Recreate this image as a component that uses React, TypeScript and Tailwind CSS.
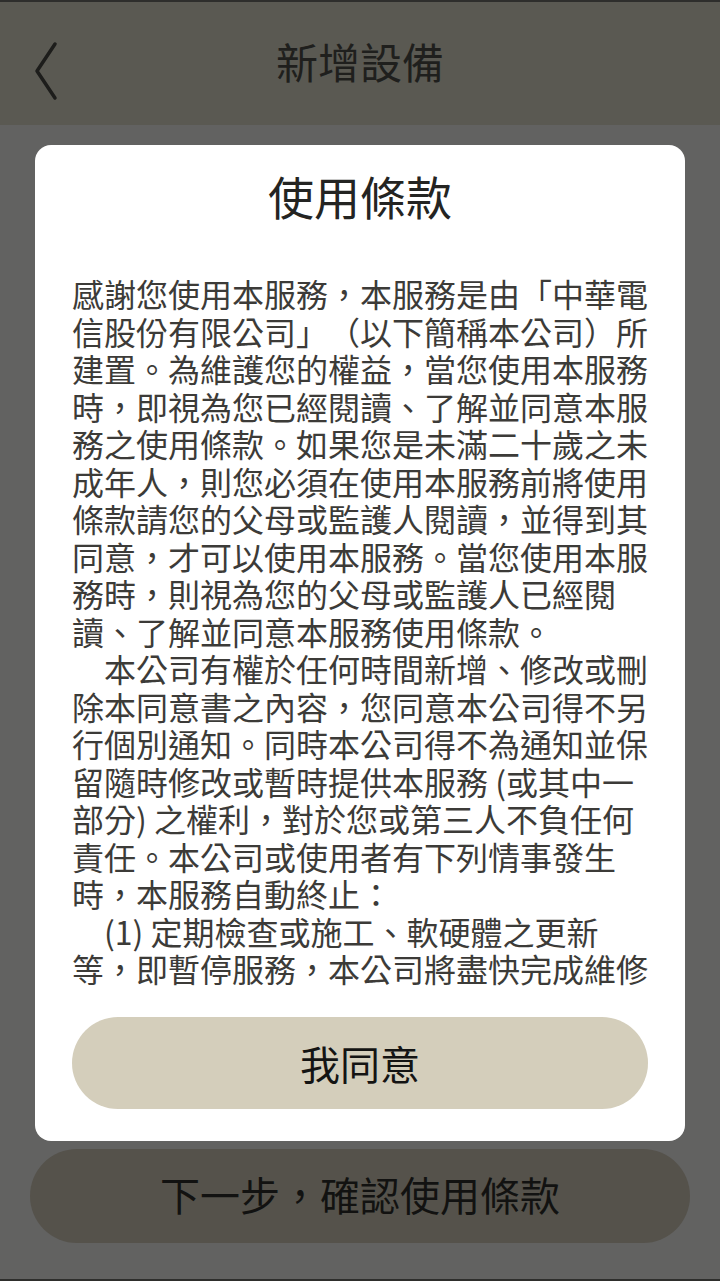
const cjk = "font-['Noto_Sans_CJK_TC','Noto_Sans',sans-serif]";

const terms = [
  '感謝您使用本服務，本服務是由「中華電信股份有限公司」（以下簡稱本公司）所建置。為維護您的權益，當您使用本服務時，即視為您已經閱讀、了解並同意本服務之使用條款。如果您是未滿二十歲之未成年人，則您必須在使用本服務前將使用條款請您的父母或監護人閱讀，並得到其同意，才可以使用本服務。當您使用本服務時，則視為您的父母或監護人已經閱讀、了解並同意本服務使用條款。',
  '　本公司有權於任何時間新增、修改或刪除本同意書之內容，您同意本公司得不另行個別通知。同時本公司得不為通知並保留隨時修改或暫時提供本服務 (或其中一部分) 之權利，對於您或第三人不負任何責任。本公司或使用者有下列情事發生時，本服務自動終止：',
  '　(1) 定期檢查或施工、軟硬體之更新等，即暫停服務，本公司將盡快完成維修並恢復服務。',
  '　(2) 發生天災或其他不可抗力之事由，致本服務無法正常提供時。',
  '　(3) 使用者違反本使用條款之任何約定時。',
];

function ChevronLeft() {
  return (
    <svg width="28" height="62" viewBox="0 0 28 62" fill="none">
      <path d="M22 4 L4 31 L22 58" stroke="#1d1d1b" strokeWidth="3.5" strokeLinecap="round" strokeLinejoin="round" />
    </svg>
  );
}

export default function App() {
  return (
    <div className={`flex h-[1281px] w-[720px] flex-col bg-[#626261] ${cjk}`}>
      <div className="h-[2px] bg-[#2e2e2c]" />

      <header className="relative flex h-[123px] items-center justify-center bg-[#5a5952] pb-[6px]">
        <div className="absolute left-[33px] top-[38px]">
          <ChevronLeft />
        </div>
        <h1 className="text-[42px] leading-none text-[#1f1f1d]">新增設備</h1>
      </header>

      <div className="mx-[35px] mt-[20px] flex h-[996px] flex-col rounded-[16px] bg-white px-[37px] pt-[23px] pb-[30px]">
        <h2 className="text-center text-[46px] leading-[55px] text-[#242422]">使用條款</h2>

        <div className="mt-[52px] h-[714px] overflow-hidden text-[32px] leading-[37.5px] text-[#3c3b38] [text-spacing-trim:space-all]">
          {terms.map((p, i) => (
            <p key={i}>{p}</p>
          ))}
        </div>

        <button className="mt-[28px] h-[92px] w-full rounded-full bg-[#d4cebb] text-[40px] leading-none text-[#141413]">
          我同意
        </button>
      </div>

      <div className="mx-[30px] mt-[8px] flex h-[94px] items-center justify-center rounded-full bg-[#55524b] pb-[4px]">
        <span className="text-[40px] leading-none text-[#121211]">下一步，確認使用條款</span>
      </div>

      <div className="flex-1" />
      <div className="h-[2px] bg-[#2e2e2c]" />
    </div>
  );
}
